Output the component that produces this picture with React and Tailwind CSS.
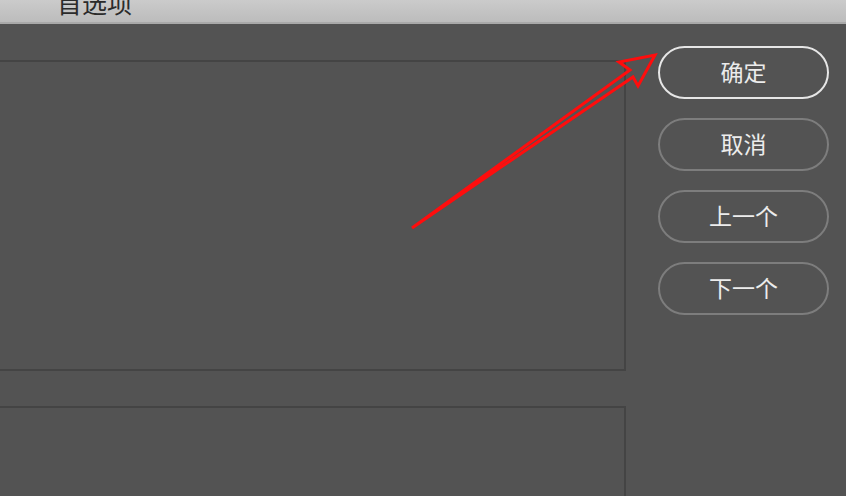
const buttons = [
  { label: '确定', primary: true },
  { label: '取消' },
  { label: '上一个' },
  { label: '下一个' },
]

function DialogButton({ label, primary }) {
  return (
    <button
      className={`w-[171px] h-[53px] rounded-full flex items-center justify-center pb-[3px] text-[23px] leading-none text-[#ececec] ${
        primary ? 'border-2 border-[#e6e6e6]' : 'border-2 border-[#7d7d7d]'
      }`}
    >
      {label}
    </button>
  )
}

function Arrow() {
  return (
    <svg className="absolute left-0 top-0 pointer-events-none" width="846" height="496" viewBox="0 0 846 496">
      <polygon
        points="412,228 630,70 619,62 655,55 638,86 633,77"
        fill="none"
        stroke="#ff0d0d"
        strokeWidth="3"
        strokeLinejoin="miter"
      />
    </svg>
  )
}

export default function App() {
  return (
    <div
      className="relative w-[846px] h-[496px] overflow-hidden bg-[#535353]"
      style={{ fontFamily: '"Noto Sans CJK SC", "Noto Sans", sans-serif' }}
    >
      <div className="h-[24px] bg-gradient-to-b from-[#cbcbcb] to-[#bcbcbc] border-b-2 border-[#a9a9a9] overflow-hidden">
        <div className="pl-[57px] -mt-[13px] text-[25px] leading-[30px] text-[#2b2b2b]">首选项</div>
      </div>
      <div className="flex">
        <div className="w-[626px] pt-[36px]">
          <div className="h-[311px] border-t-2 border-r-2 border-b-2 border-[#444444]" />
          <div className="h-[35px]" />
          <div className="h-[120px] border-t-2 border-r-2 border-[#444444]" />
        </div>
        <div className="ml-[32px] pt-[22px] flex flex-col gap-[19px]">
          {buttons.map((b) => (
            <DialogButton key={b.label} label={b.label} primary={b.primary} />
          ))}
        </div>
      </div>
      <Arrow />
    </div>
  )
}
